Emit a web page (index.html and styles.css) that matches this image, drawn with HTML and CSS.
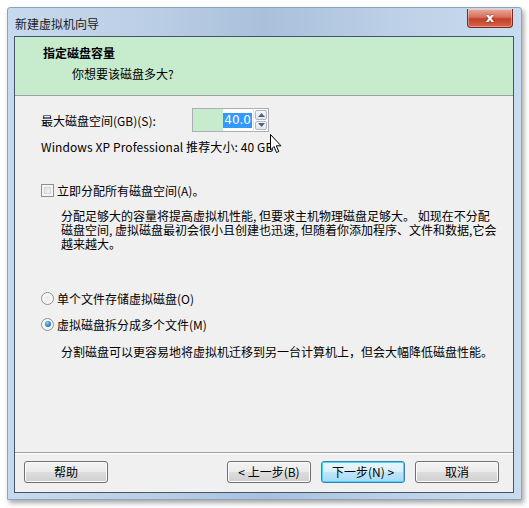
FILE: index.html
```html
<!DOCTYPE html>
<html lang="zh-CN">
<head>
<meta charset="utf-8">
<title>新建虚拟机向导</title>
<link rel="stylesheet" href="styles.css">
</head>
<body>
<div class="window">
  <div class="titlebar">
    <span class="title">新建虚拟机向导</span>
    <div class="close"><span>x</span></div>
  </div>
  <div class="client">
    <div class="header">
      <div class="h-title">指定磁盘容量</div>
      <div class="h-sub">你想要该磁盘多大?</div>
    </div>
    <div class="body">
      <div class="row size-row">
        <span class="label">最大磁盘空间(GB)(S):</span>
        <div class="spin">
          <div class="spin-input"><span class="sel">40.0</span></div>
          <div class="spin-btns">
            <div class="sb up"><svg width="7" height="4" viewBox="0 0 7 4"><path d="M0 4 L3.5 0 L7 4 Z" fill="#4d6185"/></svg></div>
            <div class="sb down"><svg width="7" height="4" viewBox="0 0 7 4"><path d="M0 0 L3.5 4 L7 0 Z" fill="#4d6185"/></svg></div>
          </div>
          <svg class="cursor" width="12" height="20" viewBox="0 0 12 20"><path d="M0.5 0.5 L0.5 16 L4 12.5 L6.5 18.5 L8.8 17.5 L6.3 11.8 L11 11.8 Z" fill="#fff" stroke="#000" stroke-width="1" stroke-linejoin="miter"/></svg>
        </div>
      </div>
      <div class="row rec">Windows XP Professional 推荐大小: 40 GB</div>
      <label class="row check-row"><span class="checkbox"></span><span>立即分配所有磁盘空间(A)。</span></label>
      <div class="para">
        <div class="pl">分配足够大的容量将提高虚拟机性能, 但要求主机物理磁盘足够大。 如现在不分配</div>
        <div class="pl">磁盘空间, 虚拟磁盘最初会很小且创建也迅速, 但随着你添加程序、文件和数据,它会</div>
        <div class="pl">越来越大。</div>
      </div>
      <label class="row radio-row r1"><span class="radio"></span><span>单个文件存储虚拟磁盘(O)</span></label>
      <label class="row radio-row r2"><span class="radio on"></span><span>虚拟磁盘拆分成多个文件(M)</span></label>
      <p class="para desc">分割磁盘可以更容易地将虚拟机迁移到另一台计算机上，但会大幅降低磁盘性能。</p>
    </div>
    <div class="footer">
      <button class="btn help">帮助</button>
      <div class="nav">
        <button class="btn">&lt; 上一步(B)</button>
        <button class="btn default">下一步(N) &gt;</button>
        <button class="btn cancel">取消</button>
      </div>
    </div>
  </div>
</div>
</body>
</html>
```
FILE: styles.css
```css
* { box-sizing: border-box; }
html, body { margin: 0; padding: 0; background: #ffffff; }
body {
  font-family: "Noto Sans CJK SC", "Noto Sans", sans-serif;
  font-size: 12px;
  color: #000;
  width: 529px;
  height: 508px;
  overflow: hidden;
}
.window {
  margin: 7px 0 0 7px;
  width: 515px;
  height: 493px;
  border: 1px solid #8da2bd;
  border-radius: 3px 3px 0 0;
  background: linear-gradient(90deg, #c7d9ee 0%, #b9cde4 30%, #a9c0db 50%, #bcd0e7 75%, #c9dbef 100%);
  box-shadow: 2px 3px 5px rgba(0,0,0,0.35);
  padding: 0 7px 6px 6px;
  display: flex;
  flex-direction: column;
}
.titlebar {
  height: 28px;
  display: flex;
  align-items: flex-start;
  justify-content: space-between;
  position: relative;
}
.title {
  font-size: 12px;
  line-height: 16px;
  color: #1a1a1a;
  margin-left: 1px;
  margin-top: 8px;
}
.close {
  width: 46px;
  height: 19px;
  margin-top: 1px;
  margin-right: 1px;
  border: 1px solid #7a2a20;
  border-top: none;
  border-radius: 0 0 4px 4px;
  background: linear-gradient(180deg, #e9a99b 0%, #d6715e 45%, #c2412a 55%, #d5654b 100%);
  display: flex;
  align-items: center;
  justify-content: center;
  box-shadow: inset 0 0 0 1px rgba(255,255,255,0.35);
}
.close span {
  color: #fff;
  font-family: "DejaVu Sans", sans-serif;
  font-weight: bold;
  font-size: 13px;
  line-height: 1;
  margin-top: -2px;
  text-shadow: 0 0 2px #6a1a10;
}
.client {
  flex: 1;
  border: 1px solid #44546a;
  background: #f0f0f0;
  display: flex;
  flex-direction: column;
}
.header {
  height: 59px;
  background: #c6ebcd;
  border-bottom: 1px solid #a0a0a0;
  padding: 8px 0 0 28px;
}
.h-title {
  font-weight: bold;
  font-size: 12px;
  line-height: 16px;
}
.h-sub {
  margin-left: 29px;
  margin-top: 5px;
  line-height: 16px;
}
.body {
  flex: 1;
  padding: 12px 0 0 26px;
  position: relative;
}
.row { display: flex; align-items: center; }
.size-row { height: 24px; }
.label { width: 151px; }
.spin { display: flex; position: relative; height: 24px; }
.spin-input {
  width: 61px;
  height: 24px;
  border: 1px solid #abadb3;
  border-right: none;
  background: linear-gradient(90deg, #c6ebcd 0%, #c6ebcd 50%, #ffffff 50%);
  display: flex;
  align-items: center;
  justify-content: flex-end;
  padding-right: 1px;
}
.sel {
  background: #3399ff;
  color: #fff;
  font-size: 12px;
  line-height: 15px;
  padding: 0 1px;
  font-family: "DejaVu Sans", sans-serif;
}
.spin-btns {
  width: 16px;
  height: 24px;
  border: 1px solid #abadb3;
  border-left: 1px solid #e3e9ef;
  background: #fff;
  display: flex;
  flex-direction: column;
  padding: 1px;
  gap: 1px;
}
.sb {
  flex: 1;
  border: 1px solid #b2b7bf;
  border-radius: 2px;
  background: linear-gradient(180deg, #f7f7f7, #e2e5ea);
  display: flex;
  align-items: center;
  justify-content: center;
}
.cursor { position: absolute; left: 78px; top: 26px; }
.rec { margin-top: 7px; height: 14px; letter-spacing: 0.1px; }
.check-row { margin-top: 29px; height: 16px; gap: 3px; }
.checkbox {
  width: 13px; height: 13px;
  border: 1px solid #8f8f8f;
  background: linear-gradient(135deg, #dcdcdc, #fbfbfb);
  box-shadow: inset 0 0 0 2px #f4f4f4, inset 0 0 0 3px #d2d2d2;
}
.para {
  margin: 11px 0 0 20px;
  line-height: 14px;
  font-size: 12px;
  white-space: nowrap;
}
.pl { height: 14px; line-height: 14px; }
.radio-row { height: 16px; gap: 3px; }
.r1 { margin-top: 39px; }
.r2 { margin-top: 10px; }
.radio {
  width: 13px; height: 13px;
  border-radius: 50%;
  border: 1px solid #8f8f8f;
  background: radial-gradient(circle, #e8e8e8 0%, #fafafa 70%);
  position: relative;
}
.radio.on::after {
  content: "";
  position: absolute;
  left: 2.5px; top: 2.5px;
  width: 6px; height: 6px;
  border-radius: 50%;
  background: radial-gradient(circle at 40% 35%, #8cd0f8 0%, #2a7ac0 60%, #1d5f9c 100%);
}
.desc { margin-top: 13px; }
.footer {
  height: 40px;
  border-top: 1px solid #a0a0a0;
  box-shadow: inset 0 1px 0 #ffffff;
  display: flex;
  justify-content: space-between;
  align-items: flex-start;
  padding: 8px 14px 0 9px;
}
.nav { display: flex; gap: 10px; }
.btn {
  width: 84px;
  height: 22px;
  font-family: "Noto Sans CJK SC", "Noto Sans", sans-serif;
  font-size: 12px;
  color: #000;
  border: 1px solid #707070;
  border-radius: 3px;
  background: linear-gradient(180deg, #f2f2f2 0%, #ebebeb 48%, #dddddd 52%, #cfcfcf 100%);
  box-shadow: inset 0 0 0 1px #fcfcfc;
  padding: 0;
  line-height: 18px;
}
.btn.default {
  border-color: #3c7fb1;
  background: linear-gradient(180deg, #eaf6fd 0%, #d9f0fc 48%, #bee6fd 52%, #a7d9f5 100%);
  box-shadow: inset 0 0 0 1px #48d8fb;
}
```
